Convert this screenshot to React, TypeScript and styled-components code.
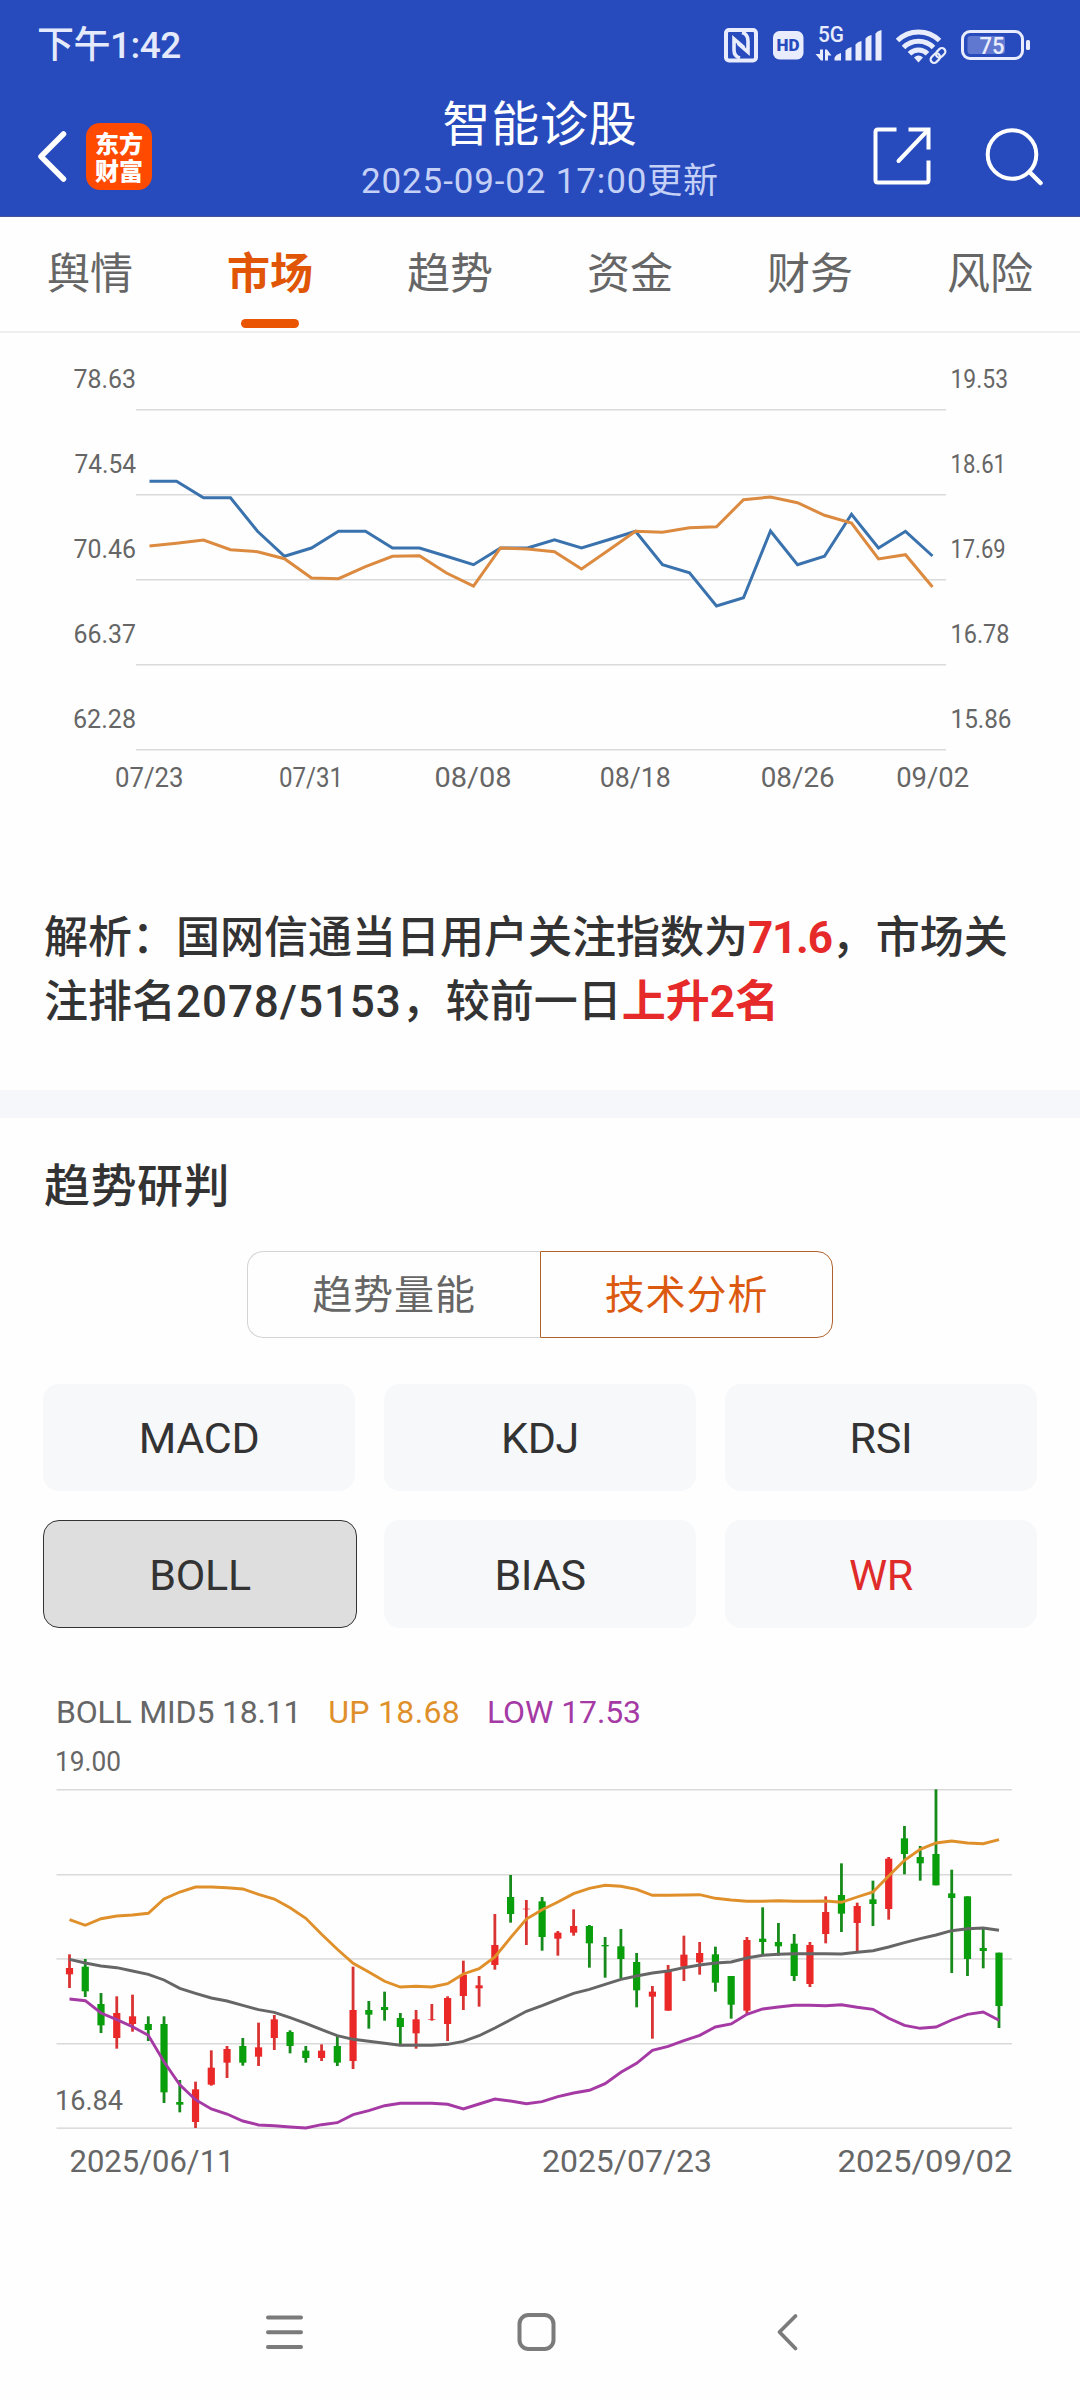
import React from "react";
import styled, { createGlobalStyle } from "styled-components";

const GlobalStyle = createGlobalStyle`
  * { box-sizing: border-box; }
  body {
    margin: 0;
    background: #fff;
    color: #333;
    font-family: Roboto, "Noto Sans CJK SC", sans-serif;
  }
`;

const Screen = styled.div`
  width: 1080px;
  height: 2400px;
  display: flex;
  flex-direction: column;
  background: #fefefe;
  overflow: hidden;
`;

/* ---------- header ---------- */

const Header = styled.header`
  height: 217px;
  flex: none;
  background: #274bbd;
  border-bottom: 1px solid #46549a;
  color: #fff;
`;

const StatusBar = styled.div`
  height: 90px;
  padding: 0 50px 0 37px;
  display: flex;
  align-items: center;
  justify-content: space-between;
`;

const Clock = styled.div`
  font-size: 37px;
  font-weight: 500;
  line-height: 50px;
  letter-spacing: -0.5px;
  padding-top: 1px;
  color: #e4e9fb;
`;

const StatusIcons = styled.div`
  height: 50px;
  display: flex;
  svg { display: block; }
`;

const NavBar = styled.div`
  height: 126px;
  padding: 6px 36px 0 36px;
  display: grid;
  grid-template-columns: 1fr auto 1fr;
  align-items: center;
`;

const NavLeft = styled.div`
  display: flex;
  align-items: center;
  gap: 18px;
`;

const NavRight = styled.div`
  display: flex;
  align-items: center;
  justify-content: flex-end;
  gap: 54px;
  margin-right: -1px;
`;

const Logo = styled.div`
  width: 66px;
  height: 67px;
  padding: 6px 9px;
  border-radius: 14px;
  background: #ff4a00;
  font: 900 24px/27px "Noto Sans CJK SC", sans-serif;
  word-break: break-all;
`;

const TitleBlock = styled.div`
  align-self: start;
  display: flex;
  flex-direction: column;
  align-items: center;
  gap: 5px;
`;

const Title = styled.h1`
  margin: 0;
  font-size: 48px;
  font-weight: 400;
  line-height: 58px;
  letter-spacing: 0.8px;
`;

const Subtitle = styled.div`
  font-size: 35px;
  line-height: 46px;
  letter-spacing: 0.85px;
  color: #c5d0f7;
`;

/* ---------- tabs ---------- */

const Tabs = styled.nav`
  height: 116px;
  flex: none;
  display: grid;
  grid-template-columns: repeat(6, 1fr);
  border-bottom: 2px solid #efefef;
`;

const Tab = styled.div<{ $active?: boolean }>`
  padding-top: 27px;
  display: flex;
  flex-direction: column;
  align-items: center;
  gap: 15px;
  font-size: 43px;
  line-height: 60px;
  font-weight: ${(p) => (p.$active ? 700 : 400)};
  color: ${(p) => (p.$active ? "#e05606" : "#666")};
  &::after {
    content: "";
    width: 58px;
    height: 9px;
    border-radius: 5px;
    background: ${(p) => (p.$active ? "#ea5504" : "transparent")};
  }
`;

/* ---------- attention section ---------- */

const ChartSvg = styled.svg`
  display: block;
  flex: none;
  font-family: Roboto, sans-serif;
`;

const AttentionSection = styled.section`
  height: 757px;
  flex: none;
  padding-top: 7px;
`;

const Analysis = styled.p`
  margin: 96px 43px 0 44px;
  font-size: 44px;
  line-height: 64px;
  font-weight: 500;
  color: #333;
`;

const Line = styled.span`
  display: block;
  white-space: nowrap;
`;

const Digits = styled.span`
  letter-spacing: 0.95px;
`;

const Hot = styled.b<{ $spacing?: number }>`
  font-weight: 700;
  letter-spacing: ${(p) => p.$spacing ?? 0}px;
  color: #e62a2a;
`;

const Divider = styled.div`
  height: 28px;
  flex: none;
  background: #f6f7fa;
`;

/* ---------- trend section ---------- */

const TrendSection = styled.section`
  padding-top: 38px;
  display: flex;
  flex-direction: column;
`;

const Heading = styled.h2`
  margin: 0 0 0 44px;
  font-size: 46px;
  font-weight: 500;
  line-height: 60px;
  letter-spacing: 0.5px;
`;

const Segments = styled.div`
  align-self: center;
  margin-top: 35px;
  width: 586px;
  height: 87px;
  display: grid;
  grid-template-columns: 1fr 1fr;
`;

const Segment = styled.div<{ $active?: boolean }>`
  padding-top: 3px;
  display: flex;
  align-items: center;
  justify-content: center;
  font-size: 40px;
  line-height: 58px;
  letter-spacing: 0.9px;
  color: ${(p) => (p.$active ? "#dc5a10" : "#666")};
  border: ${(p) => (p.$active ? "1px solid #b0622c" : "1px solid #d4d4d4")};
  &:first-child { border-radius: 16px 0 0 16px; border-right: 0; }
  &:last-child { border-radius: 0 16px 16px 0; }
`;

const Indicators = styled.div`
  margin: 46px 43px 0;
  display: grid;
  grid-template-columns: repeat(3, 312px);
  grid-template-rows: 107px 108px;
  gap: 29px;
`;

const Indicator = styled.div<{ $state?: "active" | "hot" }>`
  padding-top: 2px;
  display: flex;
  align-items: center;
  justify-content: center;
  border-radius: 16px;
  font-size: 43px;
  line-height: 50px;
  letter-spacing: -0.3px;
  background: ${(p) => (p.$state === "active" ? "#dedede" : "#f7f8fa")};
  border: ${(p) => (p.$state === "active" ? "1px solid #333" : "0")};
  margin-right: ${(p) => (p.$state === "active" ? "-2px" : "0")};
  color: ${(p) => (p.$state === "hot" ? "#e02b2b" : "#333")};
  &:nth-child(-n + 3) { padding-top: 0; }
`;

const Legend = styled.div`
  margin: 62px 0 0 56px;
  height: 44px;
  display: flex;
  gap: 27px;
  font-size: 32px;
  line-height: 44px;
  white-space: nowrap;
`;

const LegendItem = styled.span<{ $color: string; $spacing: number }>`
  color: ${(p) => p.$color};
  letter-spacing: ${(p) => p.$spacing}px;
`;

/* ---------- system navigation ---------- */

const SystemNav = styled.footer`
  margin-top: auto;
  height: 136px;
  flex: none;
  padding-left: 244px;
  display: flex;
  align-items: center;
  gap: 172px;
`;

/* ---------- status icons ---------- */

const ICON = "#e8ecfc";

const StatusGlyphs = () => (
  <svg width="308" height="50" viewBox="722 20 308 50" fontFamily="Roboto, sans-serif">
    <g fill="none" stroke={ICON}>
      <rect x="726" y="30" width="30" height="30.5" rx="3" strokeWidth="4" />
      <path d="M740 58 Q734 56.500 734 50 V39 L744 47.500" strokeWidth="3.6" />
      <path d="M742 32.500 Q748 34 748 41 V52 L738 43.500" strokeWidth="3.6" />
    </g>
    <rect x="773" y="31" width="30.500" height="28.500" rx="6.500" fill={ICON} />
    <text x="776.500" y="51" fontSize="16.500" fontWeight="900" fill="#274bbd" textLength="23" lengthAdjust="spacingAndGlyphs">HD</text>
    <text x="818" y="41.500" fontSize="21.500" fontWeight="500" fill={ICON} textLength="26" lengthAdjust="spacingAndGlyphs">5G</text>
    <g fill={ICON}>
      <path d="M820 49.500 h3 V60.500 h-2 L815.500 54 h4.500z" />
      <path d="M825 49.500 h2 l4.500 6 h-3.500 V60.500 h-3z" />
      <path d="M834.500 60.500 V58 q1-3.500 6.500-5 V60.500z" />
      <path d="M845.500 60.500 V50.500 q2-3 6-3.500 V60.500z" />
      <path d="M855.500 60.500 V44.500 q2-3 6-3.500 V60.500z" />
      <path d="M865.500 60.500 V38.500 q2-3 6-3.500 V60.500z" />
      <path d="M875.500 60.500 V33.500 q2-3 6-3.500 V60.500z" />
    </g>
    <g fill="none" stroke={ICON} strokeWidth="5">
      <path d="M897.500 40.500 A30 30 0 0 1 939.500 40.500" />
      <path d="M903.500 47.500 A21 21 0 0 1 933.500 47.500" />
      <path d="M909.500 53.800 A12.500 12.500 0 0 1 927.500 53.800" />
    </g>
    <path d="M914 57.500 Q918.500 53.500 923 57.500 L918.500 62.500z" fill={ICON} />
    <g fill="none" stroke="#274bbd" strokeWidth="5" transform="rotate(-45 938 55.500)">
      <rect x="929" y="52.500" width="10.500" height="6.500" rx="3.200" />
      <rect x="936.500" y="52.500" width="10.500" height="6.500" rx="3.200" />
    </g>
    <g fill="none" stroke={ICON} strokeWidth="2.200" transform="rotate(-45 938 55.500)">
      <rect x="929" y="52" width="10.500" height="7" rx="3.500" />
      <rect x="936.500" y="52" width="10.500" height="7" rx="3.500" />
    </g>
    <rect x="962.500" y="31.500" width="60" height="27" rx="7.500" fill="none" stroke={ICON} strokeWidth="3" />
    <rect x="967.500" y="36" width="37.500" height="18" rx="3" fill="#6078cf" />
    <rect x="1026" y="40" width="4" height="10" rx="1.500" fill={ICON} />
    <text x="979.500" y="54" fontSize="23" fontWeight="500" fill={ICON} textLength="25" lengthAdjust="spacingAndGlyphs">75</text>
  </svg>
);

const BackIcon = () => (
  <svg width="32" height="52" viewBox="0 0 32 52">
    <path d="M27.500 4 L5 26.500 L27.500 49" fill="none" stroke="#fff" strokeWidth="5.500" strokeLinecap="round" strokeLinejoin="round" />
  </svg>
);

const ShareIcon = () => (
  <svg width="58" height="58" viewBox="0 0 58 58" fill="none" stroke="#fff" strokeWidth="4">
    <path d="M23.500 2.500 H5 Q2.500 2.500 2.500 5 V53 Q2.500 55.500 5 55.500 H53 Q55.500 55.500 55.500 53 V33.500" />
    <path d="M35.500 2.500 H55.500 V22.500" />
    <path d="M55 3 L25.500 34" strokeLinecap="round" />
  </svg>
);

const SearchIcon = () => (
  <svg width="60" height="60" viewBox="0 0 60 60" fill="none" stroke="#fff" strokeWidth="4">
    <circle cx="27" cy="28.500" r="24.300" />
    <path d="M44.500 46 L55.500 57" strokeWidth="4.500" strokeLinecap="round" />
  </svg>
);

/* ---------- charts ---------- */

/* All y samples are stored at three units to the pixel. */
const toPoints = (ys: number[], x0: number, step: number) =>
  ys.map((y, i) => `${(x0 + i * step).toFixed(1)},${((y + 1) / 3).toFixed(1)}`).join(" ");

const Label = ({ x, y, width, children }: { x: number; y: number; width: number; children: string }) => (
  <text x={x} y={y} textLength={width} lengthAdjust="spacingAndGlyphs">{children}</text>
);

const attention = [423, 423, 472, 472, 573, 648, 623, 573, 573, 623, 623, 648, 673, 623, 623, 598, 623, 598, 573, 673, 697, 797, 772, 572, 673, 648, 522, 623, 573, 647];
const price = [617, 609, 599, 628, 634, 655, 713, 715, 679, 648, 646, 698, 737, 623, 626, 634, 686, 630, 573, 576, 562, 559, 478, 470, 487, 525, 548, 656, 643, 740];

const leftAxis: [string, number][] = [["78.63", 62.5], ["74.54", 61.5], ["70.46", 62.5], ["66.37", 62.5], ["62.28", 63]];
const rightAxis: [string, number][] = [["19.53", 57.5], ["18.61", 55.5], ["17.69", 55], ["16.78", 59], ["15.86", 61]];
const days: [string, number, number][] = [
  ["07/23", 149.3, 68.5], ["07/31", 311, 64], ["08/08", 473, 77], ["08/18", 635.3, 71], ["08/26", 797.7, 74], ["09/02", 932.7, 73],
];

const AttentionChart = () => (
  <ChartSvg width="1080" height="470" viewBox="0 0 1080 470">
    {[0, 1, 2, 3, 4].map((i) => (
      <g key={i} fill="#666" fontSize="25">
        <rect x="136" y={69 + i * 85} width="810" height="1.500" fill="#dadada" />
        <Label x={136 - leftAxis[i][1]} y={48 + i * 85} width={leftAxis[i][1]}>{leftAxis[i][0]}</Label>
        <Label x={950.5} y={48 + i * 85} width={rightAxis[i][1]}>{rightAxis[i][0]}</Label>
      </g>
    ))}
    <polyline points={toPoints(attention, 149.5, 27)} fill="none" stroke="#3a72ae" strokeWidth="3" />
    <polyline points={toPoints(price, 149.5, 27)} fill="none" stroke="#db8a3f" strokeWidth="3" />
    <g fill="#666" fontSize="27.500">
      {days.map(([t, cx, w]) => (
        <Label key={t} x={cx - w / 2} y={446.5} width={w}>{t}</Label>
      ))}
    </g>
  </ChartSvg>
);

type Candle = [up: 0 | 1, high: number, top: number, bottom: number, low: number];
const candles: Candle[] = [
  [1, 823, 864, 883, 924], [0, 837, 860, 934, 951], [0, 939, 972, 1036, 1059], [1, 949, 999, 1074, 1106], [1, 944, 1009, 1032, 1055],
  [0, 1009, 1032, 1050, 1083], [0, 1009, 1032, 1237, 1269], [0, 1200, 1266, 1274, 1297], [1, 1205, 1228, 1326, 1344], [1, 1111, 1163, 1214, 1217],
  [1, 1098, 1107, 1148, 1194], [0, 1074, 1098, 1148, 1157], [1, 1028, 1102, 1130, 1158], [1, 1005, 1018, 1074, 1110], [0, 1051, 1056, 1098, 1120],
  [0, 1098, 1112, 1134, 1148], [1, 1093, 1112, 1134, 1143], [0, 1065, 1098, 1148, 1158], [1, 860, 990, 1143, 1167], [0, 963, 990, 1004, 1046],
  [0, 935, 981, 990, 1022], [0, 999, 1014, 1041, 1093], [1, 990, 1018, 1060, 1106], [1, 972, 1017, 1019, 1022], [1, 949, 954, 1032, 1083],
  [1, 842, 884, 948, 990], [1, 888, 916, 925, 980], [1, 702, 795, 855, 869], [0, 585, 651, 702, 728], [1, 660, 686, 688, 795],
  [0, 651, 664, 771, 812], [1, 753, 758, 776, 827], [1, 688, 738, 758, 767], [0, 735, 738, 790, 863], [0, 771, 795, 799, 893],
  [0, 747, 799, 837, 895], [0, 819, 846, 931, 982], [1, 918, 935, 950, 1076], [1, 855, 874, 992, 992], [1, 767, 824, 860, 903],
  [1, 786, 819, 847, 884], [0, 800, 823, 908, 935], [0, 888, 888, 974, 1016], [1, 771, 780, 992, 1001], [0, 682, 776, 786, 823],
  [0, 729, 786, 799, 827], [0, 762, 791, 888, 903], [1, 786, 795, 912, 921], [1, 649, 696, 762, 790], [0, 550, 645, 701, 756],
  [1, 668, 678, 729, 815], [0, 602, 658, 672, 738], [1, 531, 536, 687, 719], [0, 438, 475, 522, 583], [0, 498, 531, 550, 602],
  [0, 328, 522, 616, 616], [0, 569, 640, 654, 879], [0, 649, 649, 837, 888], [0, 743, 804, 813, 865], [0, 818, 818, 978, 1044],
];

const upper = [718, 735, 715, 707, 704, 699, 656, 635, 620, 620, 622, 626, 642, 656, 682, 714, 762, 807, 849, 875, 903, 920, 918, 920, 910, 881, 865, 830, 772, 716, 688, 665, 640, 624, 615, 618, 627, 645, 645, 644, 643, 654, 659, 663, 663, 661, 663, 663, 662, 666, 650, 635, 587, 540, 507, 488, 482, 488, 490, 478];
const middle = [837, 848, 857, 862, 872, 882, 899, 924, 939, 953, 962, 975, 988, 996, 1012, 1029, 1048, 1066, 1077, 1083, 1089, 1095, 1095, 1095, 1092, 1083, 1066, 1043, 1018, 993, 976, 957, 939, 927, 912, 897, 887, 878, 872, 862, 854, 848, 845, 833, 825, 822, 820, 820, 820, 821, 816, 811, 800, 787, 775, 764, 751, 745, 743, 750];
const lower = [956, 961, 998, 1018, 1039, 1065, 1144, 1213, 1258, 1286, 1301, 1322, 1334, 1336, 1340, 1343, 1333, 1327, 1303, 1291, 1276, 1269, 1269, 1269, 1272, 1286, 1271, 1256, 1262, 1270, 1264, 1249, 1238, 1230, 1210, 1176, 1149, 1110, 1098, 1081, 1065, 1040, 1031, 1002, 986, 980, 975, 975, 976, 973, 981, 987, 1014, 1035, 1044, 1040, 1019, 1002, 995, 1020];

const X0 = 69.5;
const STEP = 15.754;

const BollChart = () => (
  <ChartSvg width="1080" height="466" viewBox="0 54 1080 466">
    {[109, 194, 278.2, 363, 447.4].map((y) => (
      <rect key={y} x="56.500" y={y} width="955.500" height="1.500" fill="#dadada" />
    ))}
    {candles.map(([up, high, top, bottom, low], i) => {
      const x = X0 + i * STEP;
      return (
        <g key={i}>
          <rect x={x - 1.4} y={high / 3} width="2.800" height={(low - high) / 3} fill={up ? "#d93434" : "#178a1c"} />
          <rect x={x - 3.6} y={top / 3} width="7.200" height={(bottom - top) / 3} fill={up ? "#ea2828" : "#099e0b"} />
        </g>
      );
    })}
    <g fill="none" strokeWidth="2.900">
      <polyline points={toPoints(middle, X0, STEP)} stroke="#666" />
      <polyline points={toPoints(upper, X0, STEP)} stroke="#e0902a" />
      <polyline points={toPoints(lower, X0, STEP)} stroke="#a53aa5" />
    </g>
    <g fill="#666" fontSize="27">
      <Label x={55} y={90.5} width={66}>19.00</Label>
      <Label x={55} y={430} width={68}>16.84</Label>
    </g>
    <g fill="#666" fontSize="31">
      <Label x={69.5} y={491.5} width={165}>2025/06/11</Label>
      <Label x={542} y={491.5} width={170}>2025/07/23</Label>
      <Label x={837.5} y={491.5} width={175}>2025/09/02</Label>
    </g>
  </ChartSvg>
);

const tabs = ["舆情", "市场", "趋势", "资金", "财务", "风险"];

const App: React.FC = () => (
  <Screen>
    <GlobalStyle />
    <Header>
      <StatusBar>
        <Clock>下午1:42</Clock>
        <StatusIcons><StatusGlyphs /></StatusIcons>
      </StatusBar>
      <NavBar>
        <NavLeft>
          <BackIcon />
          <Logo>东方财富</Logo>
        </NavLeft>
        <TitleBlock>
          <Title>智能诊股</Title>
          <Subtitle>2025-09-02 17:00更新</Subtitle>
        </TitleBlock>
        <NavRight>
          <ShareIcon />
          <SearchIcon />
        </NavRight>
      </NavBar>
    </Header>

    <Tabs>
      {tabs.map((t) => <Tab key={t} $active={t === "市场"}>{t}</Tab>)}
    </Tabs>

    <AttentionSection>
      <AttentionChart />
      <Analysis>
        <Line>解析：国网信通当日用户关注指数为<Hot $spacing={-1.2}>71.6</Hot>，市场关</Line>
        <Line>注排名<Digits>2078/5153</Digits>，较前一日<Hot>上升2名</Hot></Line>
      </Analysis>
    </AttentionSection>

    <Divider />

    <TrendSection>
      <Heading>趋势研判</Heading>
      <Segments>
        <Segment>趋势量能</Segment>
        <Segment $active>技术分析</Segment>
      </Segments>
      <Indicators>
        <Indicator>MACD</Indicator>
        <Indicator>KDJ</Indicator>
        <Indicator>RSI</Indicator>
        <Indicator $state="active">BOLL</Indicator>
        <Indicator>BIAS</Indicator>
        <Indicator $state="hot">WR</Indicator>
      </Indicators>
      <Legend>
        <LegendItem $color="#666" $spacing={-0.2}>BOLL MID5 18.11</LegendItem>
        <LegendItem $color="#e0902a" $spacing={0.3}>UP 18.68</LegendItem>
        <LegendItem $color="#a53aa5" $spacing={-0.1}>LOW 17.53</LegendItem>
      </Legend>
      <BollChart />
    </TrendSection>

    <SystemNav>
      <svg width="80" height="60" viewBox="0 0 80 60" stroke="#7b7b7b" strokeWidth="4" strokeLinecap="round">
        <path d="M24 15.500 H57 M24 30.300 H57 M24 45 H57" />
      </svg>
      <svg width="80" height="60" viewBox="0 0 80 60" stroke="#7b7b7b" strokeWidth="4" fill="none">
        <rect x="23.500" y="13" width="34" height="34" rx="9" />
      </svg>
      <svg width="80" height="60" viewBox="0 0 80 60" stroke="#7b7b7b" strokeWidth="3.800" fill="none" strokeLinecap="round" strokeLinejoin="round">
        <path d="M47.500 14 L31.500 30 L47.500 46.500" />
      </svg>
    </SystemNav>
  </Screen>
);

export default App;
